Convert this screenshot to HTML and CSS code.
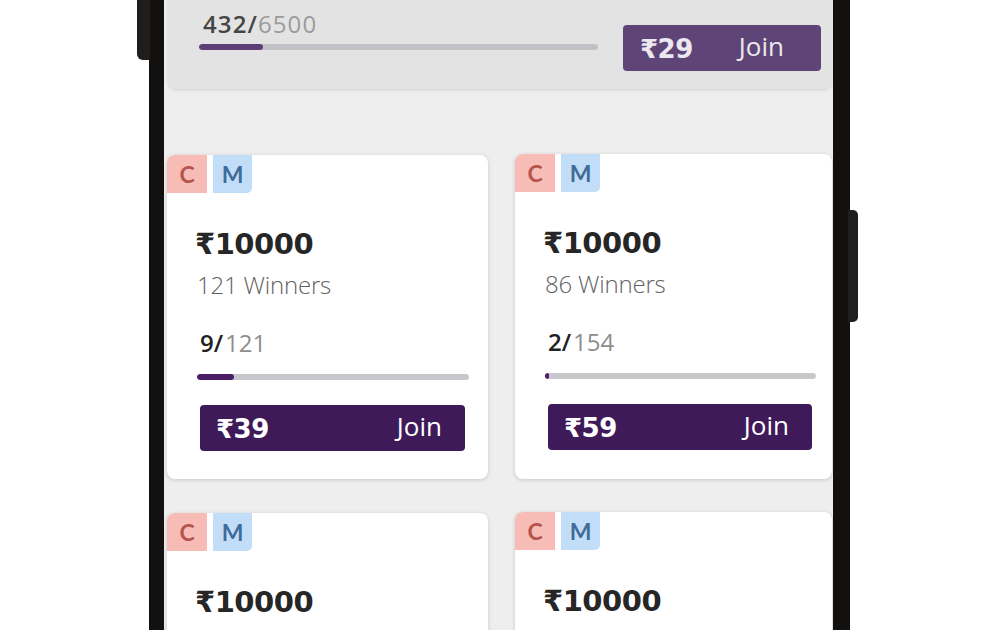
FILE: index.html
```html
<!DOCTYPE html>
<html>
<head>
<meta charset="utf-8">
<link rel="stylesheet" href="styles.css">
</head>
<body>
<div class="phone">
  <div class="side-btn side-left"></div>
  <div class="side-btn side-right"></div>
  <div class="screen">
    <div class="top-card">
      <div class="top-progress">
        <div class="fraction top-fraction"><b>432/</b><span>6500</span></div>
        <div class="bar top-bar"><div class="fill" style="width:16%"></div></div>
      </div>
      <div class="join top-join"><span class="price">₹29</span><span class="join-text">Join</span></div>
    </div>
    <div class="grid">
      <div class="card">
        <div class="badges"><span class="badge c">C</span><span class="badge m">M</span></div>
        <div class="title">₹10000</div>
        <div class="winners">121 Winners</div>
        <div class="fraction"><b>9/</b><span>121</span></div>
        <div class="bar"><div class="fill" style="width:13.5%"></div></div>
        <div class="join"><span class="price">₹39</span><span class="join-text">Join</span></div>
      </div>
      <div class="card card-r">
        <div class="badges"><span class="badge c">C</span><span class="badge m">M</span></div>
        <div class="title">₹10000</div>
        <div class="winners">86 Winners</div>
        <div class="fraction"><b>2/</b><span>154</span></div>
        <div class="bar"><div class="fill" style="width:1.6%"></div></div>
        <div class="join"><span class="price">₹59</span><span class="join-text">Join</span></div>
      </div>
      <div class="card">
        <div class="badges"><span class="badge c">C</span><span class="badge m">M</span></div>
        <div class="title">₹10000</div>
        <div class="winners">50 Winners</div>
        <div class="fraction"><b>5/</b><span>100</span></div>
        <div class="bar"><div class="fill" style="width:5%"></div></div>
        <div class="join"><span class="price">₹49</span><span class="join-text">Join</span></div>
      </div>
      <div class="card card-r">
        <div class="badges"><span class="badge c">C</span><span class="badge m">M</span></div>
        <div class="title">₹10000</div>
        <div class="winners">40 Winners</div>
        <div class="fraction"><b>3/</b><span>80</span></div>
        <div class="bar"><div class="fill" style="width:4%"></div></div>
        <div class="join"><span class="price">₹69</span><span class="join-text">Join</span></div>
      </div>
    </div>
  </div>
</div>
</body>
</html>
```

FILE: styles.css
```css
html, body {
  margin: 0;
  padding: 0;
  background: #ffffff;
  overflow: hidden;
  height: 630px;
}

body {
  font-family: "Open Sans", "Noto Sans", sans-serif;
}

.phone {
  position: relative;
  margin-left: 149px;
  width: 701px;
  height: 630px;
  box-sizing: border-box;
  border-left: 15px solid #121110;
  border-right: 17px solid #121110;
}

.side-btn {
  position: absolute;
  background: #1f1e1d;
}

.side-left {
  left: -27px;
  top: 0;
  width: 13px;
  height: 60px;
  border-radius: 0 0 0 6px;
}

.side-right {
  right: -25px;
  top: 210px;
  width: 10px;
  height: 112px;
  border-radius: 0 5px 5px 0;
}

.screen {
  height: 630px;
  overflow: hidden;
  background: #efeeee;
  padding: 0 1px 0 3px;
}

.top-card {
  display: flex;
  align-items: flex-end;
  height: 130px;
  margin-top: -41px;
  margin-left: 1px;
  box-sizing: border-box;
  padding: 0 11px 18px 31px;
  background: #e4e3e3;
  border-radius: 0 0 8px 8px;
  box-shadow: 0 1px 3px rgba(0, 0, 0, 0.12);
}

.top-progress {
  width: 399px;
  margin-right: 25px;
  margin-bottom: 21px;
}

.fraction {
  font-size: 24px;
  line-height: 30px;
  padding-left: 5px;
  color: #8d8d8d;
}

.fraction b {
  color: #222;
  font-weight: 600;
}

.fraction span {
  margin-left: 2px;
}

.top-fraction {
  font-size: 24px;
  line-height: 26px;
  letter-spacing: 1.1px;
  margin-bottom: 7px;
  padding-left: 4px;
  color: #9b9b9b;
}

.top-fraction b {
  color: #454545;
}

.top-fraction span {
  margin-left: 0;
}

.bar {
  height: 6px;
  border-radius: 3px;
  background: #c6c8cc;
  overflow: hidden;
}

.fill {
  height: 100%;
  border-radius: 3px;
  background: #4a1f65;
}

.top-bar {
  background: #c2c2c6;
}

.top-bar .fill {
  background: #5d3f78;
}

.join {
  display: flex;
  align-items: center;
  justify-content: space-between;
  height: 46px;
  box-sizing: border-box;
  padding: 0 23px 0 16px;
  border-radius: 4px;
  background: #3e1a59;
  color: #ffffff;
}

.top-join {
  width: 198px;
  flex: none;
  padding: 0 37px 0 17px;
  background: #5f4577;
  color: #ebe8ee;
}

.price {
  font-family: "DejaVu Sans", "Noto Sans", sans-serif;
  font-weight: 700;
  font-size: 26px;
  letter-spacing: -0.5px;
  margin-top: 2px;
}

.join-text {
  font-size: 26px;
  margin-bottom: 5px;
}

.grid {
  display: grid;
  grid-template-columns: 321px 317px;
  column-gap: 27px;
  row-gap: 34px;
  margin-top: 66px;
}

.card {
  background: #ffffff;
  border-radius: 8px;
  box-shadow: 0 1px 4px rgba(0, 0, 0, 0.16);
  padding: 0 23px 28px 28px;
  overflow: hidden;
}

.card-r {
  margin-top: -1px;
  padding-right: 20px;
}

.badges {
  display: flex;
  gap: 6px;
  margin-left: -28px;
  height: 38px;
}

.badge {
  display: flex;
  align-items: center;
  justify-content: center;
  width: 40px;
  height: 38px;
  font-family: "Lato", sans-serif;
  font-weight: 700;
  font-size: 23px;
}

.badge.c {
  background: #f8bcb6;
  color: #b4544c;
}

.badge.m {
  width: 39px;
  background: #c2ddf8;
  color: #3f6b9a;
  border-radius: 0 0 5px 0;
}

.title {
  margin-top: 34px;
  font-family: "DejaVu Sans", "Noto Sans", sans-serif;
  font-weight: 700;
  font-size: 29px;
  line-height: 34px;
  color: #262626;
  letter-spacing: -0.5px;
}

.winners {
  margin-top: 9px;
  padding-left: 2px;
  font-size: 24px;
  line-height: 30px;
  letter-spacing: -0.2px;
  color: #626262;
  font-weight: 300;
}

.card .fraction {
  margin-top: 28px;
}

.card .bar {
  margin-top: 16px;
  margin-left: 2px;
  margin-right: -4px;
}

.card .join {
  margin-top: 25px;
  margin-left: 5px;
}
```
